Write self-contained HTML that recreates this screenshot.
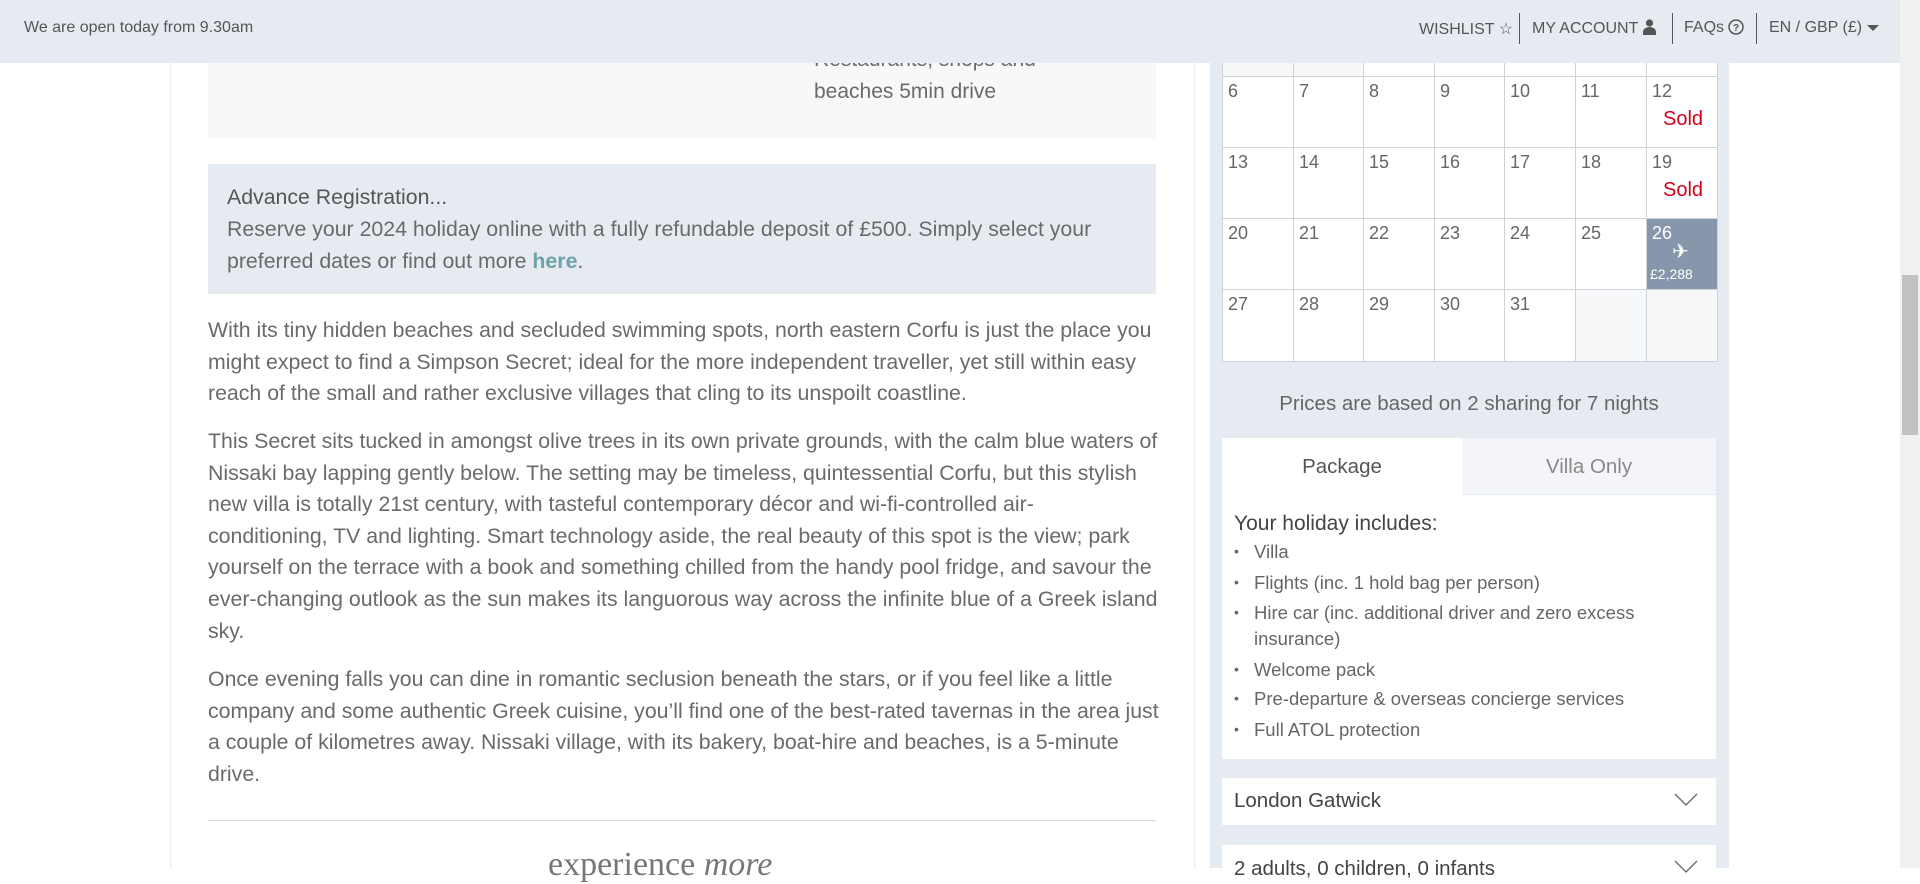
<!DOCTYPE html>
<html><head><meta charset="utf-8"><style>
*{margin:0;padding:0;box-sizing:border-box}
body{width:1920px;height:868px;overflow:hidden;background:#fff;font-family:"Liberation Sans",sans-serif;color:#666;position:relative}
.abs{position:absolute;white-space:nowrap}
.top{position:absolute;left:0;top:0;width:1900px;height:63px;background:#e6ebf2;z-index:5}
.top span{position:absolute;top:19px;font-size:16px;color:#555}
.div{position:absolute;top:13px;width:1px;height:31px;background:#555}
.p{position:absolute;left:208px;font-size:21.3px;line-height:31.6px;color:#6a6a6a;white-space:nowrap}
.c{position:absolute;border:1px solid #cfd3d8;background:#fff;font-size:18px;color:#666;padding:4px 5px}
.sold{position:absolute;left:16px;top:31px;color:#d0021b;font-size:20px}
.li{position:absolute;left:1234px;font-size:18.5px;color:#666;white-space:nowrap}
.li:before{content:"•";position:absolute;left:0;font-size:14px;top:2px}
.li span{padding-left:20px}
</style></head><body>
<div class="top">
<span style="left:24px">We are open today from 9.30am</span>
<span style="left:1419px">WISHLIST ☆</span>
<div class="div" style="left:1519px"></div>
<span style="left:1532px">MY ACCOUNT <svg width="13" height="16" viewBox="0 0 13 16" style="vertical-align:-2px"><circle cx="6.5" cy="4" r="3.6" fill="#555"/><path d="M0 16v-3c0-3 3-5 6.5-5s6.5 2 6.5 5v3z" fill="#555"/></svg></span>
<div class="div" style="left:1672px"></div>
<span style="left:1684px">FAQs <svg width="16" height="16" viewBox="0 0 16 16" style="vertical-align:-3px"><circle cx="8" cy="8" r="7" fill="none" stroke="#555" stroke-width="1.5"/><text x="8" y="12" font-size="10" text-anchor="middle" fill="#555" font-family="Liberation Sans" font-weight="bold">?</text></svg></span>
<div class="div" style="left:1756px"></div>
<span style="left:1769px">EN / GBP (£) <svg width="12" height="8" viewBox="0 0 12 8"><path d="M0 1h12L6 7z" fill="#555"/></svg></span>
</div>
<div style="position:absolute;left:1900px;top:0;width:20px;height:868px;background:#f1f1f1"></div>
<div style="position:absolute;left:1902px;top:275px;width:16px;height:160px;background:#c1c1c1"></div>
<div style="position:absolute;left:170px;top:0;width:1px;height:868px;background:#e8ebef"></div>
<div style="position:absolute;left:1194px;top:0;width:1px;height:868px;background:#e8ebef"></div>
<div style="position:absolute;left:208px;top:40px;width:948px;height:98px;background:#f7f8fa"></div>
<div class="abs" style="left:814px;top:48px;font-size:21px;color:#6a6a6a">Restaurants, shops and</div>
<div class="abs" style="left:814px;top:80px;font-size:21px;color:#6a6a6a">beaches 5min drive</div>
<div style="position:absolute;left:208px;top:164px;width:948px;height:130px;background:#e6ebf2"></div>
<div class="abs" style="left:227px;top:185px;font-size:21.3px;color:#555">Advance Registration...</div>
<div class="p" style="left:227px;top:214px">Reserve your 2024 holiday online with a fully refundable deposit of £500. Simply select your<br>preferred dates or find out more <b style="color:#6ba3a8">here</b>.</div>
<div class="p" style="top:315px">With its tiny hidden beaches and secluded swimming spots, north eastern Corfu is just the place you<br>might expect to find a Simpson Secret; ideal for the more independent traveller, yet still within easy<br>reach of the small and rather exclusive villages that cling to its unspoilt coastline.</div>
<div class="p" style="top:426px">This Secret sits tucked in amongst olive trees in its own private grounds, with the calm blue waters of<br>Nissaki bay lapping gently below. The setting may be timeless, quintessential Corfu, but this stylish<br>new villa is totally 21st century, with tasteful contemporary décor and wi-fi-controlled air-<br>conditioning, TV and lighting. Smart technology aside, the real beauty of this spot is the view; park<br>yourself on the terrace with a book and something chilled from the handy pool fridge, and savour the<br>ever-changing outlook as the sun makes its languorous way across the infinite blue of a Greek island<br>sky.</div>
<div class="p" style="top:664px">Once evening falls you can dine in romantic seclusion beneath the stars, or if you feel like a little<br>company and some authentic Greek cuisine, you’ll find one of the best-rated tavernas in the area just<br>a couple of kilometres away. Nissaki village, with its bakery, boat-hire and beaches, is a 5-minute<br>drive.</div>
<div style="position:absolute;left:208px;top:820px;width:948px;height:1px;background:#d5dbe3"></div>
<div class="abs" style="left:548px;top:846px;font-size:34px;font-family:'Liberation Serif',serif;color:#777">experience <i>more</i></div>
<div style="position:absolute;left:1210px;top:63px;width:519px;height:805px;background:#e6ebf2"></div>
<div id="cal"></div>
<script>
(function(){
var xs=[1222,1293,1363,1434,1504,1575,1646,1717],ys=[5,76,147,218,289,361];
var d=[["","","","","","",""],["6","7","8","9","10","11","12"],["13","14","15","16","17","18","19"],["20","21","22","23","24","25","26"],["27","28","29","30","31","",""]];
var h="";
for(var r=0;r<5;r++)for(var c=0;c<7;c++){
var bg="#fff",col="#666",extra="";
if((r==0&&c<2)||(r==4&&c>4))bg="#f7f8fa";
if(r==3&&c==6){bg="#8896ab";col="#fff";extra='<div style="position:absolute;left:25px;top:20px;font-size:20px">✈</div><div style="position:absolute;left:3px;top:47px;font-size:14px">£2,288</div>';}
if((r==1||r==2)&&c==6)extra='<div class="sold">Sold</div>';
h+='<div class="c" style="left:'+xs[c]+'px;top:'+ys[r]+'px;width:'+(xs[c+1]-xs[c]+1)+'px;height:'+(ys[r+1]-ys[r]+1)+'px;background:'+bg+';color:'+col+'">'+d[r][c]+extra+'</div>';}
document.getElementById("cal").innerHTML=h;})();
</script>
<div class="abs" style="left:1222px;width:494px;text-align:center;top:392px;font-size:20.5px;color:#666">Prices are based on 2 sharing for 7 nights</div>
<div style="position:absolute;left:1222px;top:438px;width:494px;height:321px;background:#fff"></div>
<div style="position:absolute;left:1462px;top:438px;width:254px;height:57px;background:#f3f5f8;border-bottom:1px solid #e6ebf2"></div>
<div class="abs" style="left:1222px;width:240px;text-align:center;top:455px;font-size:20.5px;color:#555">Package</div>
<div class="abs" style="left:1462px;width:254px;text-align:center;top:455px;font-size:20.5px;color:#888">Villa Only</div>
<div class="abs" style="left:1234px;top:512px;font-size:21px;color:#444">Your holiday includes:</div>
<div class="li" style="top:541px"><span>Villa</span></div>
<div class="li" style="top:572px"><span>Flights (inc. 1 hold bag per person)</span></div>
<div class="li" style="top:602px"><span>Hire car (inc. additional driver and zero excess</span></div>
<div class="abs" style="left:1254px;top:628px;font-size:18.5px;color:#666">insurance)</div>
<div class="li" style="top:659px"><span>Welcome pack</span></div>
<div class="li" style="top:688px"><span>Pre-departure &amp; overseas concierge services</span></div>
<div class="li" style="top:719px"><span>Full ATOL protection</span></div>
<div style="position:absolute;left:1222px;top:778px;width:494px;height:47px;background:#fff"></div>
<div class="abs" style="left:1234px;top:789px;font-size:20.5px;color:#444">London Gatwick</div>
<svg style="position:absolute;left:1674px;top:793px" width="24" height="14" viewBox="0 0 24 14"><path d="M1 1l11 11L23 1" fill="none" stroke="#666" stroke-width="1.3"/></svg>
<div style="position:absolute;left:1222px;top:845px;width:494px;height:30px;background:#fff"></div>
<div class="abs" style="left:1234px;top:857px;font-size:20.5px;color:#444">2 adults, 0 children, 0 infants</div>
<svg style="position:absolute;left:1674px;top:860px" width="24" height="14" viewBox="0 0 24 14"><path d="M1 1l11 11L23 1" fill="none" stroke="#666" stroke-width="1.3"/></svg>
</body></html>
